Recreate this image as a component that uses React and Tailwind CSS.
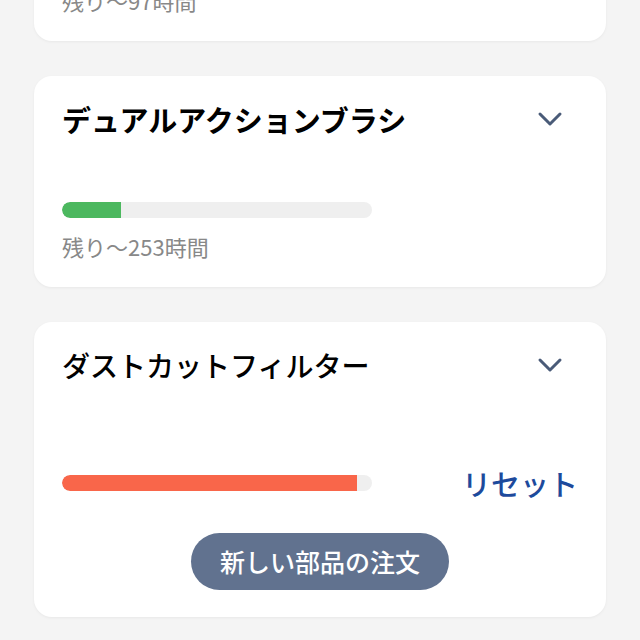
// 消耗品の残り時間カード一覧（ブラシ・フィルターなど）
// - 各カード：部品名 + 開閉シェブロン、残り時間のバー
// - 残りが少ない部品には「リセット」と「新しい部品の注文」ボタン

const parts = [
  { name: 'メインブラシ', remaining: 97, ratio: 0.3, color: 'green', weight: 'bold' },
  { name: 'デュアルアクションブラシ', remaining: 253, ratio: 0.19, color: 'green', weight: 'bold' },
  { name: 'ダストカットフィルター', remaining: 0, ratio: 0.95, color: 'red', weight: 'medium', expired: true },
]

function Chevron() {
  return (
    <svg width="26" height="16" viewBox="0 0 26 16" fill="none" className="text-[#4a5b78]">
      <path d="M3 3l10 10L23 3" stroke="currentColor" strokeWidth="3" strokeLinecap="round" strokeLinejoin="round" />
    </svg>
  )
}

function Bar({ ratio, color }) {
  return (
    <div className="h-4 w-[310px] overflow-hidden rounded-full bg-[#efefef]">
      <div
        className={`h-full rounded-l-full ${color === 'red' ? 'bg-[#f9664a]' : 'bg-[#4cb85f]'}`}
        style={{ width: `${ratio * 100}%` }}
      />
    </div>
  )
}

function PartCard({ part }) {
  return (
    <div className="rounded-[18px] bg-white px-7 pb-[27px] pt-[23px] shadow-[0_1px_3px_rgba(0,0,0,0.05)]">
      {/* 部品名とシェブロン */}
      <div className="flex h-10 items-center justify-between">
        <h2
          className={`leading-10 text-black ${
            part.weight === 'bold' ? 'text-[29px] font-bold' : 'text-[28px] font-medium'
          }`}
        >
          {part.name}
        </h2>
        <div className="mr-[15px] flex items-center">
          <Chevron />
        </div>
      </div>

      {part.expired ? (
        <>
          {/* 使用期限切れ：リセット + 注文ボタン */}
          <div className="mt-[78px] flex h-10 items-center justify-between">
            <Bar ratio={part.ratio} color={part.color} />
            <button className="text-[29px] font-medium leading-10 text-[#1d4a9c]">リセット</button>
          </div>
          <div className="mt-[30px] flex justify-center">
            <button className="h-[57px] rounded-full bg-[#61728f] px-[29px] text-[25px] font-medium text-white">
              新しい部品の注文
            </button>
          </div>
        </>
      ) : (
        <>
          <div className="mt-[63px]">
            <Bar ratio={part.ratio} color={part.color} />
          </div>
          <p className="mt-[14px] text-[22px] leading-7 text-[#888888]">残り〜{part.remaining}時間</p>
        </>
      )}
    </div>
  )
}

export default function App() {
  return (
    <div
      className="h-[640px] overflow-hidden bg-[#f4f4f4] px-[34px]"
      style={{ fontFamily: '"Noto Sans CJK JP", "Noto Sans", sans-serif' }}
    >
      {/* 一つ目のカードは画面上部で切れている */}
      <div className="-mt-[170px] flex flex-col gap-[35px]">
        {parts.map((p) => (
          <PartCard key={p.name} part={p} />
        ))}
      </div>
    </div>
  )
}
